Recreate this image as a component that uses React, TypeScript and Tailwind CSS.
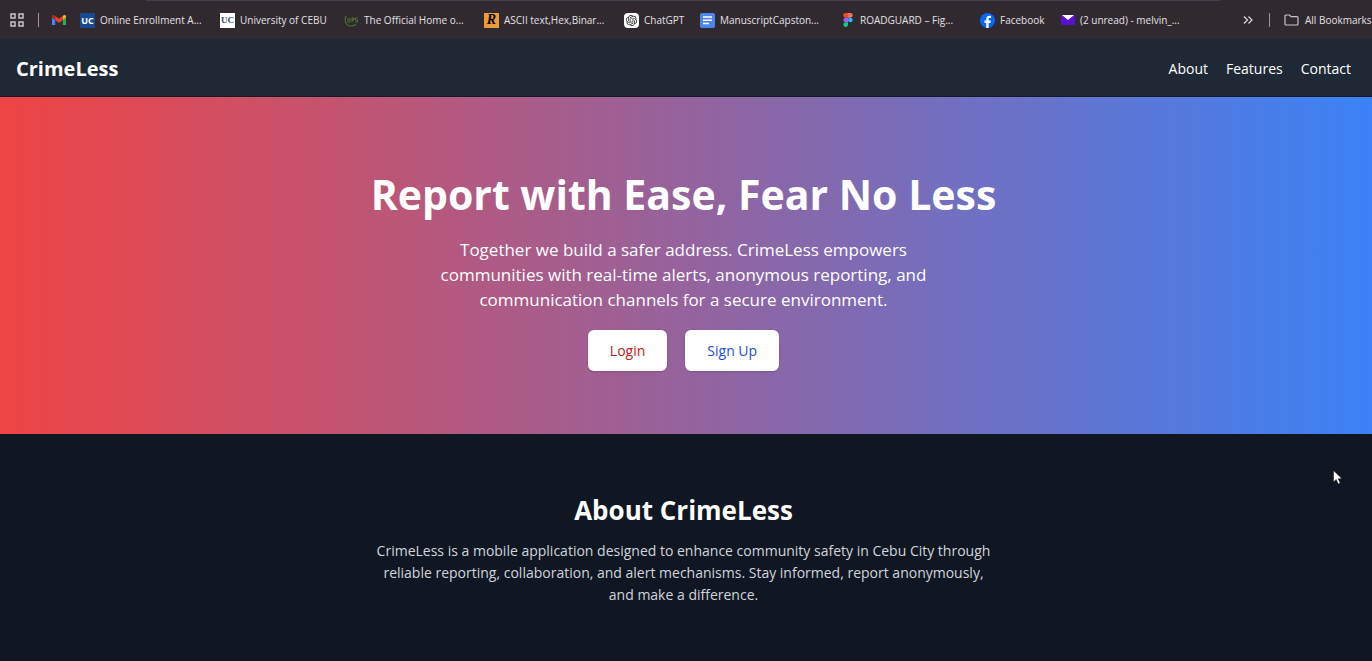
import type { ReactNode } from "react";
import { SiOpenai } from "react-icons/si";

function GmailIcon() {
  return (
    <svg viewBox="0 0 24 18" className="w-[14px] shrink-0" aria-hidden="true">
      <path d="M1.6 18h3.9V8.6L0 4.4v12A1.6 1.6 0 0 0 1.6 18z" fill="#4285f4" />
      <path d="M18.5 18h3.9a1.6 1.6 0 0 0 1.6-1.6v-12l-5.5 4.2z" fill="#34a853" />
      <path d="M18.5 1.6v7L24 4.4V2.5c0-2.1-2.4-3.2-4-2z" fill="#fbbc04" />
      <path d="M5.5 8.6v-7L12 6.5l6.5-4.9v7L12 13.5z" fill="#ea4335" />
      <path d="M0 2.5v1.9l5.5 4.2v-7L4 .5C2.400-.7 0 .4 0 2.500z" fill="#c5221f" />
    </svg>
  );
}

function DocsIcon() {
  return (
    <svg viewBox="0 0 15 15" className="size-[15px]" aria-hidden="true">
      <rect width="15" height="15" rx="2" fill="#4d86e8" />
      <path d="M3 4h9M3 7.300h9M3 10.600h6" stroke="#fff" strokeWidth="1.500" />
    </svg>
  );
}

function FigmaIcon() {
  return (
    <svg viewBox="0 0 10 15" className="h-[14px] w-[10px]" aria-hidden="true">
      <path d="M2.500 0H5v5H2.500a2.500 2.500 0 0 1 0-5z" fill="#f24e1e" />
      <path d="M5 0h2.500a2.500 2.500 0 0 1 0 5H5z" fill="#ff7262" />
      <path d="M2.500 5H5v5H2.500a2.500 2.500 0 0 1 0-5z" fill="#a259ff" />
      <circle cx="7.500" cy="7.500" r="2.500" fill="#1abcfe" />
      <path d="M2.500 10H5v2.500A2.500 2.500 0 1 1 2.500 10z" fill="#0acf83" />
    </svg>
  );
}

function FacebookIcon() {
  return (
    <svg viewBox="0 0 24 24" className="size-[15px]" aria-hidden="true">
      <circle cx="12" cy="12" r="12" fill="#0866ff" />
      <path
        d="M10 24v-8.200H7.200V12H10v-1.900c0-3.900 1.900-5.700 5.300-5.700.8 0 1.700.1 2.200.3v3.400h-1.700c-1.500 0-2 .7-2 2V12h3.600l-.7 3.800h-2.900V24z"
        fill="#fff"
      />
    </svg>
  );
}

function MailIcon() {
  return (
    <svg viewBox="0 0 14 10" className="h-[10px] w-[14px]" aria-hidden="true">
      <rect width="14" height="10" rx="1" fill="#5b0fd0" />
      <path d="M1 0h12L7 5z" fill="#fff" />
    </svg>
  );
}

function LeafIcon() {
  return (
    <svg viewBox="0 0 15 15" className="size-[15px]" aria-hidden="true">
      <path d="M2 3C0 8 2 13 7 13c2.500 0 4-.6 5-1.600" fill="none" stroke="#4c7a2e" strokeWidth="1.100" />
      <path d="M4 5v3c0 2 2 2 2 0V5M8 9V5h2v2H8M13.500 5h-2v2h2v2h-2" fill="none" stroke="#55802f" strokeWidth=".9" />
    </svg>
  );
}

function Tile({ className, children }: { className: string; children: ReactNode }) {
  return (
    <span aria-hidden="true" className={`flex size-[15px] items-center justify-center overflow-hidden leading-none ${className}`}>
      {children}
    </span>
  );
}

const bookmarks: { label: string; width: string; icon: ReactNode }[] = [
  {
    label: "Online Enrollment A...",
    width: "w-31",
    icon: <Tile className="bg-[#174a91] text-[9px] font-bold text-white">UC</Tile>,
  },
  {
    label: "University of CEBU",
    width: "w-27",
    icon: <Tile className="bg-white font-['Liberation_Serif',serif] text-[9px] font-bold text-[#39477c]">UC</Tile>,
  },
  { label: "The Official Home o...", width: "w-31", icon: <LeafIcon /> },
  {
    label: "ASCII text,Hex,Binar...",
    width: "w-31",
    icon: <Tile className="bg-[#ee9a3a] font-['Liberation_Serif',serif] text-[14px] font-bold text-black italic">R</Tile>,
  },
  {
    label: "ChatGPT",
    width: "w-15",
    icon: (
      <Tile className="rounded-sm bg-white text-[#222]">
        <SiOpenai className="size-[11px]" />
      </Tile>
    ),
  },
  { label: "ManuscriptCapston...", width: "w-31", icon: <DocsIcon /> },
  { label: "ROADGUARD – Fig...", width: "w-31", icon: <FigmaIcon /> },
  { label: "Facebook", width: "w-16", icon: <FacebookIcon /> },
  { label: "(2 unread) - melvin_...", width: "w-31", icon: <MailIcon /> },
];

function BookmarksBar() {
  return (
    <div className="flex h-[39px] flex-col overflow-hidden bg-[#302a30] text-[10px] text-[#e4e0e4]">
      <div className="mr-[152px] ml-[146px] h-px shrink-0 bg-[#454047]" />
      <nav aria-label="Bookmarks" className="flex h-[38px] items-center whitespace-nowrap">
        <button aria-label="Apps" className="ml-[10px] shrink-0">
          <svg viewBox="0 0 14 14" className="size-[14px]" fill="none" stroke="#c9c4c9" strokeWidth="1.500">
            <path d="M1 1h4v4H1zM9 1h4v4H9zM1 9h4v4H1zM9 9h4v4H9z" />
          </svg>
        </button>
        <span className="ml-[14px] h-[14px] w-px shrink-0 bg-[#a58f96]" />
        <a href="#gmail" aria-label="Gmail" className="mr-[14px] ml-[13px] shrink-0">
          <GmailIcon />
        </a>
        <div className="flex shrink-0 gap-4">
          {bookmarks.map((item) => (
            <a key={item.label} href="#bookmark" className={`flex shrink-0 items-center gap-[5px] ${item.width}`}>
              <span className="flex w-[15px] shrink-0 justify-center">{item.icon}</span>
              {item.label}
            </a>
          ))}
        </div>
        <div className="ml-auto flex w-[129px] shrink-0 items-center">
          <button aria-label="More bookmarks" className="shrink-0">
            <svg viewBox="0 0 10 10" className="size-[10px]" fill="none" stroke="#dcd8dc" strokeWidth="1.200">
              <path d="m1 1.500 3.500 3.500L1 8.500M5.500 1.500 9 5 5.500 8.500" />
            </svg>
          </button>
          <span className="ml-4 h-[14px] w-px shrink-0 bg-[#a58f96]" />
          <a href="#all" className="ml-[14px] flex shrink-0 items-center gap-[6px]">
            <svg viewBox="0 0 15 12" className="h-3 w-[15px]" fill="none" stroke="#c9c4c9" strokeWidth="1.200" aria-hidden="true">
              <path d="M1 2a1 1 0 0 1 1-1h3.500L7 2.700h6a1 1 0 0 1 1 1V10a1 1 0 0 1-1 1H2a1 1 0 0 1-1-1z" />
            </svg>
            All Bookmarks
          </a>
        </div>
      </nav>
    </div>
  );
}

export default function App() {
  return (
    <div className="relative min-h-screen overflow-hidden bg-[#101723] font-['Open_Sans','Noto_Sans',sans-serif] text-white">
      <BookmarksBar />
      <header className="flex h-[58px] items-center justify-between border-b border-[#151b2b] bg-[#1f2935] pt-[2px] pr-[21px] pl-4">
        <a href="#home" className="text-[20px] font-bold">CrimeLess</a>
        <nav aria-label="Main" className="flex gap-[18px] text-[14px]">
          <a href="#about">About</a>
          <a href="#features">Features</a>
          <a href="#contact">Contact</a>
        </nav>
      </header>
      <main>
        <section className="flex flex-col items-center bg-linear-to-r/srgb from-[#ef4444] to-[#3b82f6] pt-18 pr-[5px] pb-[63px] text-center">
          <h1 className="text-[41px] leading-[50px] font-bold">Report with Ease, Fear No Less</h1>
          <p className="mt-[18px] max-w-[520px] text-[17px] leading-[25px]">
            Together we build a safer address. CrimeLess empowers communities with real-time alerts, anonymous
            reporting, and communication channels for a secure environment.
          </p>
          <div className="mt-[18px] flex gap-[18px] text-[14px] font-medium">
            <button className="h-[41px] rounded-md bg-white px-[22px] text-[#b91c1c] shadow-sm">Login</button>
            <button className="h-[41px] rounded-md bg-white px-[22px] text-[#1d4ed8] shadow-sm">Sign Up</button>
          </div>
        </section>
        <section id="about" className="flex flex-col items-center pt-[60px] pr-[5px] pb-[55px] text-center">
          <h2 className="text-[26px] leading-8 font-bold">About CrimeLess</h2>
          <p className="mt-[14px] max-w-[620px] text-[14px] leading-[22px] text-[#d1d5db]">
            CrimeLess is a mobile application designed to enhance community safety in Cebu City through reliable
            reporting, collaboration, and alert mechanisms. Stay informed, report anonymously, and make a difference.
          </p>
        </section>
      </main>
      <svg viewBox="0 0 10 15" className="pointer-events-none absolute top-[470px] right-[29px] h-[15px] w-[10px]" aria-hidden="true">
        <path d="M.5.5v11.500l2.700-2.500 2 4.500 2-.9-2-4.400h3.800z" fill="#fff" stroke="#111" strokeWidth=".5" />
      </svg>
    </div>
  );
}
